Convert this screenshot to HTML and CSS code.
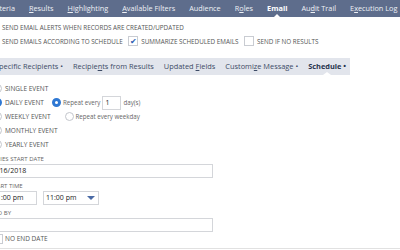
FILE: index.html
```html
<!DOCTYPE html>
<html lang="en">
<head>
    <meta charset="UTF-8">
    <title>Saved Search - Email</title>
    <link rel="stylesheet" href="styles.css">
</head>
<body>
    <div class="tabs">
        <span class="tab first">Criteria</span>
        <span class="tab"><u>R</u>esults</span>
        <span class="tab"><u>H</u>ighlighting</span>
        <span class="tab"><u>A</u>vailable Filters</span>
        <span class="tab">Audience</span>
        <span class="tab">R<u>o</u>les</span>
        <span class="tab active">Email</span>
        <span class="tab">Au<u>d</u>it Trail</span>
        <span class="tab">E<u>x</u>ecution Log</span>
    </div>

    <div class="options">
        <div class="line">SEND EMAIL ALERTS WHEN RECORDS ARE CREATED/UPDATED</div>
        <div class="line">
            SEND EMAILS ACCORDING TO SCHEDULE
            <span class="check checked">&#10004;</span>SUMMARIZE SCHEDULED EMAILS
            <span class="check"></span>SEND IF NO RESULTS
        </div>
    </div>

    <div class="subtabs">
        <span class="subtab first">Specific Recipients &bull;</span>
        <span class="subtab">Recipie<u>n</u>ts from Results</span>
        <span class="subtab">Updated <u>F</u>ields</span>
        <span class="subtab">Customi<u>z</u>e Message &bull;</span>
        <span class="subtab active">Schedule &bull;</span>
    </div>

    <div class="schedule">
        <div class="events">
            <div class="event"><span class="radio"></span>SINGLE EVENT</div>
            <div class="event">
                <span class="radio on"></span>DAILY EVENT
                <span class="repeat"><span class="radio on"></span>Repeat every <span class="box num">1</span> day(s)</span>
            </div>
            <div class="event">
                <span class="radio"></span>WEEKLY EVENT
                <span class="repeat weekday"><span class="radio"></span>Repeat every weekday</span>
            </div>
            <div class="event"><span class="radio"></span>MONTHLY EVENT</div>
            <div class="event"><span class="radio"></span>YEARLY EVENT</div>
        </div>

        <div class="label">SERIES START DATE</div>
        <div class="box wide">7/16/2018</div>

        <div class="label">START TIME</div>
        <div class="times">
            <div class="box time">11:00 pm</div>
            <div class="box select">11:00 pm <span class="arrow"></span></div>
        </div>

        <div class="label">END BY</div>
        <div class="box wide"></div>

        <div class="event noend"><span class="check"></span>NO END DATE</div>
    </div>
</body>
</html>
```

FILE: styles.css
```css
body {
    margin: 0;
    font-family: "Open Sans", sans-serif;
    background: #ffffff;
    color: #555;
    overflow: hidden;
}

/* main tab bar */
.tabs {
    display: flex;
    height: 17px;
    background: #5e6d8c;
    white-space: nowrap;
}
.tab {
    position: relative;
    font-size: 7.3px;
    line-height: 17px;
    color: #eef1f6;
    padding: 0 7px;
}
.tab.first {
    margin-left: -17px;
}
.tab.active {
    color: #fff;
    font-weight: bold;
    font-size: 7.4px;
}
.tab.active::after {
    content: "";
    position: absolute;
    left: 50%;
    bottom: 0;
    margin-left: -3px;
    border: 3px solid transparent;
    border-bottom-color: #fff;
    border-top: 0;
}

/* options under the tabs */
.options {
    padding: 4px 2px 9px;
}
.line {
    font-size: 6.3px;
    line-height: 14px;
    color: #555;
    white-space: nowrap;
}
.check {
    display: inline-block;
    box-sizing: border-box;
    width: 10px;
    height: 10px;
    border: 1px solid #c9ccd2;
    background: #fff;
    vertical-align: middle;
    margin: -2px 3px 0 4px;
    font-size: 8px;
    line-height: 8px;
    text-align: center;
    color: #2a5cb3;
}

/* sub tab bar */
.subtabs {
    display: flex;
    width: 350px;
    height: 17px;
    background: #e2e5ec;
    white-space: nowrap;
}
.subtab {
    position: relative;
    font-size: 7.4px;
    line-height: 17px;
    color: #3d4b66;
    padding: 0 5px;
}
.subtab.first {
    margin-left: -10px;
}
.subtab.active {
    color: #26334d;
    font-weight: bold;
}
.subtab.active::after {
    content: "";
    position: absolute;
    left: 50%;
    bottom: 0;
    margin-left: -4px;
    border: 3px solid transparent;
    border-left-width: 4px;
    border-right-width: 4px;
    border-bottom-color: #fff;
    border-top: 0;
}

/* schedule panel */
.schedule {
    margin-left: -10px;
    padding-top: 7px;
    border-bottom: 1px solid #e1e1e1;
    padding-bottom: 2px;
}
.event {
    display: flex;
    align-items: center;
    height: 13.8px;
    font-size: 6.5px;
    color: #555;
    white-space: nowrap;
}
.radio {
    display: inline-block;
    box-sizing: border-box;
    width: 9px;
    height: 9px;
    border: 1px solid #c3c6cc;
    border-radius: 50%;
    background: #fff;
    margin: 0 3px 0 3px;
}
.radio.on {
    border: 3px solid #2f78d3;
}
.repeat {
    display: flex;
    align-items: center;
    margin-left: 8px;
    font-size: 6.2px;
    color: #666;
}
.repeat .radio {
    margin: 0 2px 0 0;
}
.repeat.weekday {
    margin-left: 14px;
}
.box {
    box-sizing: border-box;
    border: 1px solid #d4d6da;
    background: #fff;
    height: 14px;
    font-size: 7px;
    line-height: 12px;
    padding-left: 2px;
    color: #222;
}
.box.num {
    display: inline-block;
    width: 19px;
    margin: 0 2px;
}
.box.wide {
    width: 223px;
}
.label {
    font-size: 6px;
    line-height: 8px;
    color: #666;
    margin: 4px 0 1px;
    white-space: nowrap;
}
.times {
    display: flex;
    gap: 6px;
}
.box.time {
    width: 47px;
}
.box.select {
    width: 56px;
    display: flex;
    justify-content: space-between;
    align-items: center;
}
.arrow {
    width: 0;
    height: 0;
    border-left: 4px solid transparent;
    border-right: 4px solid transparent;
    border-top: 4px solid #4a6aa5;
    margin-right: 3px;
}
.noend .check {
    margin: 0 2px 0 3px;
    color: #2a5cb3;
}
```
